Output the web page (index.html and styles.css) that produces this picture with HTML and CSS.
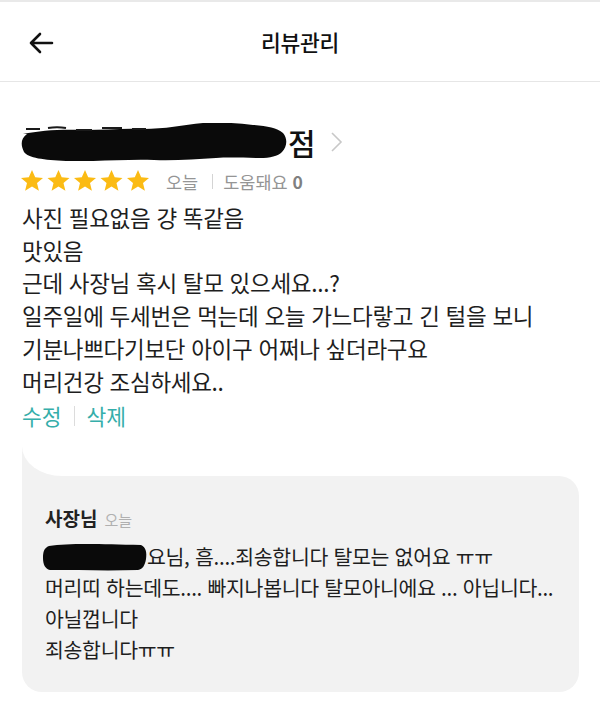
FILE: index.html
```html
<!DOCTYPE html>
<html lang="ko">
<head>
    <meta charset="UTF-8">
    <title>리뷰관리</title>
    <link rel="stylesheet" href="styles.css">
</head>
<body>
    <div class="topbar">
        <svg class="back" width="26" height="22" viewBox="0 0 26 22">
            <path d="M24 11H3M12 2L3 11l9 9" fill="none" stroke="#111" stroke-width="2.6" stroke-linecap="round" stroke-linejoin="round"/>
        </svg>
        <div class="title">리뷰관리</div>
    </div>

    <div class="review">
        <div class="store">
            <!-- redacted store name -->
            <svg class="redact" width="272" height="38" viewBox="0 0 272 38">
                <path d="M3 11c18-4 40-5 62-4 20 0 38-2 58-1 22 0 40-4 60-6 18-1 34 0 50 2 14 1 24 3 30 8 5 6 4 14-1 19-4 4-12 6-22 6-14 0-30-1-44 0-20 1-42 3-62 2-30-1-60 2-88 1-22-1-38-3-42-9-3-6-4-13 3-18z" fill="#0a0a0a"/>
                <path d="M6 6h14M28 5c6-1 12-1 18 0M56 7h16M82 5h20M112 6h14" stroke="#1a1a1a" stroke-width="2" fill="none"/>
            </svg>
            <span class="store-name">점</span>
            <svg class="chevron" width="14" height="22" viewBox="0 0 14 22">
                <path d="M2 2l9 9-9 9" fill="none" stroke="#c8c8c8" stroke-width="1.6"/>
            </svg>
        </div>
        <div class="meta">
            <div class="stars">
                <svg width="130" height="24" viewBox="0 0 130 24">
                    <defs>
                        <path id="star" d="M12 1l3.2 7.3 7.8.6-6 5.1 1.9 7.7L12 17.6 5.1 21.7 7 14 1 8.9l7.8-.6z" fill="#fbbb14"/>
                    </defs>
                    <use href="#star" x="0"/>
                    <use href="#star" x="26.5"/>
                    <use href="#star" x="53"/>
                    <use href="#star" x="79.5"/>
                    <use href="#star" x="106"/>
                </svg>
            </div>
            <span class="date">오늘</span>
            <span class="sep"></span>
            <span class="helpful">도움돼요 <b>0</b></span>
        </div>
        <div class="content">
            <p>사진 필요없음 걍 똑같음</p>
            <p>맛있음</p>
            <p>근데 사장님 혹시 탈모 있으세요...?</p>
            <p>일주일에 두세번은 먹는데 오늘 가느다랗고 긴 털을 보니</p>
            <p>기분나쁘다기보단 아이구 어쩌나 싶더라구요</p>
            <p>머리건강 조심하세요..</p>
        </div>
        <div class="actions">
            <span>수정</span>
            <span class="sep"></span>
            <span>삭제</span>
        </div>
    </div>

    <div class="reply">
        <div class="reply-head">
            <span class="owner">사장님</span>
            <span class="reply-date">오늘</span>
        </div>
        <div class="reply-body">
            <p><svg class="redact-small" width="104" height="30" viewBox="0 0 104 30"><path d="M6 4c20-3 50-2 92-1 5 2 6 8 5 14-1 6-3 10-8 11-30 1-60 0-88 0-5-1-7-6-7-12 0-6 1-10 6-12z" fill="#0a0a0a"/></svg>요님, 흠....죄송합니다 탈모는 없어요 ㅠㅠ</p>
            <p>머리띠 하는데도.... 빠지나봅니다 탈모아니에요 ... 아닙니다...</p>
            <p>아닐껍니다</p>
            <p>죄송합니다ㅠㅠ</p>
        </div>
    </div>
</body>
</html>
```

FILE: styles.css
```css
body {
    margin: 0;
    background: #fff;
    font-family: "Noto Sans CJK KR", "Noto Sans", sans-serif;
    color: #1e1e1e;
    width: 600px;
    height: 716px;
    overflow: hidden;
}
.topbar {
    height: 79px;
    border-top: 2px solid #e9e9e9;
    border-bottom: 1px solid #e6e6e6;
    display: flex;
    align-items: center;
    justify-content: center;
    position: relative;
}
.topbar .back {
    position: absolute;
    left: 28px;
    top: 30px;
}
.title {
    font-size: 21.5px;
    font-weight: 500;
    color: #111;
    letter-spacing: -0.3px;
}
.review {
    padding: 41px 20px 0 20px;
}
.store {
    display: flex;
    align-items: center;
    height: 38px;
}
.redact {
    margin-right: -4px;
}
.store-name {
    font-size: 30px;
    font-weight: 500;
    color: #111;
    line-height: 38px;
}
.chevron {
    margin-left: 14px;
}
.meta {
    display: flex;
    align-items: center;
    margin-top: 7px;
    height: 26px;
    font-size: 17.5px;
    color: #959595;
}
.stars {
    display: flex;
    margin-right: 16px;
}
.stars svg {
    display: block;
}
.meta .sep {
    width: 1px;
    height: 15px;
    background: #d4d4d4;
    margin: 0 10px 0 14px;
}
.helpful b {
    color: #808080;
    font-weight: 700;
}
.content {
    margin-top: 7px;
    padding-left: 2px;
}
.content p {
    margin: 0;
    font-size: 22.5px;
    line-height: 32.7px;
    color: #1e1e1e;
    letter-spacing: -0.3px;
}
.actions {
    display: flex;
    align-items: center;
    margin-top: 2px;
    padding-left: 2px;
    font-size: 21.5px;
    line-height: 34px;
    color: #35aeaa;
}
.actions .sep {
    width: 1px;
    height: 20px;
    background: #dcdcdc;
    margin: 0 12px;
}
.reply {
    position: relative;
    margin: 43px 21px 0 22px;
    background: #f2f2f2;
    border-radius: 0 20px 20px 20px;
    padding: 28px 24px 27px 23px;
}
.reply::before {
    content: "";
    position: absolute;
    left: 0;
    top: -31px;
    width: 40px;
    height: 31px;
    background: #f2f2f2;
}
.reply::after {
    content: "";
    position: absolute;
    left: 0;
    top: -32px;
    width: 60px;
    height: 32px;
    background: #fff;
    border-bottom-left-radius: 40px 30px;
}
.reply-head {
    display: flex;
    align-items: baseline;
}
.owner {
    font-size: 19px;
    font-weight: 700;
    color: #222;
}
.reply-date {
    font-size: 15px;
    color: #b0b0b0;
    margin-left: 7px;
}
.reply-body {
    margin-top: 10px;
}
.reply-body p {
    margin: 0;
    font-size: 20.5px;
    line-height: 31px;
    color: #1e1e1e;
    letter-spacing: -0.3px;
    display: flex;
    align-items: center;
}
.redact-small {
    margin-left: -2px;
}
```
